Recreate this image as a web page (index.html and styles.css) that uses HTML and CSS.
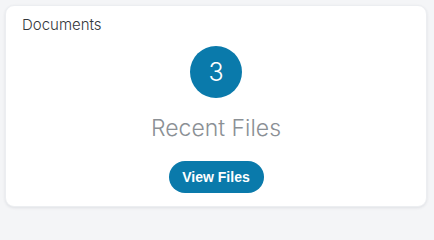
FILE: index.html
```html
<!DOCTYPE html>
<html lang="en">
<head>
<meta charset="utf-8">
<title>Documents</title>
<link rel="stylesheet" href="styles.css">
</head>
<body>
<section class="card">
  <h2 class="card-title">Documents</h2>
  <div class="card-body">
    <div class="count">3</div>
    <div class="label">Recent Files</div>
    <button class="btn" type="button">View Files</button>
  </div>
</section>
</body>
</html>
```
FILE: styles.css
```css
html, body {
  margin: 0;
  padding: 0;
}
body {
  background: #f4f5f7;
  font-family: Inter, "Noto Sans", sans-serif;
  width: 434px;
  height: 217px;
  padding: 5px 7px 0 5px;
  box-sizing: border-box;
  overflow: hidden;
}
.card {
  width: 422px;
  height: 202px;
  box-sizing: border-box;
  background: #fff;
  border-radius: 9px;
  border: 1px solid #eceef1;
  box-shadow: 0 1px 3px rgba(40, 50, 70, 0.10);
  padding: 10px 16px 0 16px;
  display: flex;
  flex-direction: column;
}
.card-title {
  margin: 0;
  font-size: 15px;
  line-height: 18px;
  font-weight: 300;
  color: #33373c;
}
.card-body {
  display: flex;
  flex-direction: column;
  align-items: center;
}
.count {
  width: 52px;
  height: 52px;
  border-radius: 50%;
  background: #0a7aab;
  color: #fff;
  font-size: 25px;
  font-weight: 300;
  display: flex;
  align-items: center;
  justify-content: center;
  margin-top: 12px;
}
.label {
  margin-top: 15px;
  font-size: 23px;
  line-height: 30px;
  font-weight: 300;
  color: #8b9095;
}
.btn {
  margin-top: 18px;
  width: 95px;
  height: 32px;
  border: none;
  border-radius: 16px;
  background: #0a7aab;
  color: #fff;
  font-family: "Liberation Sans", Arial, sans-serif;
  font-size: 14px;
  font-weight: 700;
  padding: 0;
}
```
